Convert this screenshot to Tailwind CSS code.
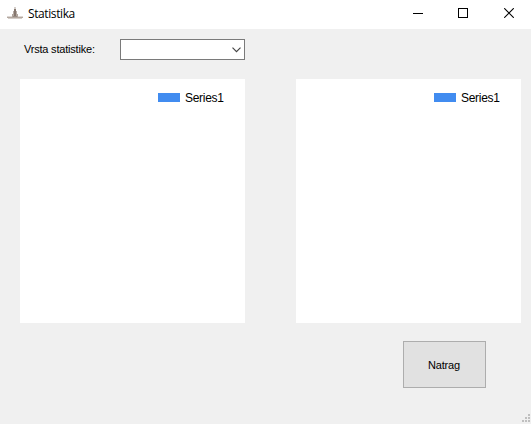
<!DOCTYPE html>
<html lang="hr">
<head>
<meta charset="utf-8">
<title>Statistika</title>
<script src="https://cdn.jsdelivr.net/npm/@tailwindcss/browser@4"></script>
</head>
<body class="w-[531px] h-[424px] overflow-hidden bg-[#f0f0f0] text-black font-['Liberation_Sans',Arial,sans-serif] flex flex-col">
  <header class="h-[29px] shrink-0 bg-white flex items-start">
    <svg class="ml-[7px] mt-[7px] w-4 h-3 shrink-0" viewBox="0 0 16 12" shape-rendering="crispEdges">
      <path d="M7 0h2v2H7z" fill="#d5cfcb"/>
      <path d="M7 2h2v7H7z" fill="#86786f"/>
      <path d="M6 4h1v5H6z M9 4h1v5H9z" fill="#b5aaa3"/>
      <path d="M5 7h1v3H5z M10 7h1v3h-1z" fill="#b0a49c"/>
      <path d="M0 9h5v1H0z M11 9h5v1h-5z" fill="#ded8d4"/>
      <path d="M6 9h4v1H6z" fill="#988b83"/>
      <path d="M0 10h16v1H0z" fill="#b3a8a0"/>
      <path d="M1 11h14v1H1z" fill="#d5cec9"/>
    </svg>
    <h1 class="ml-[5px] mt-[6px] text-[12px] leading-4 tracking-[-0.4px] font-['Open_Sans','Noto_Sans',sans-serif]">Statistika</h1>
    <div class="ml-auto mt-2 mr-[17px] flex gap-[35px]">
      <svg class="w-[10px] h-[10px]" viewBox="0 0 10 10" shape-rendering="crispEdges"><path d="M0 5h10v1H0z"/></svg>
      <svg class="w-[10px] h-[10px]" viewBox="0 0 10 10" shape-rendering="crispEdges"><path d="M.5.5h9v9h-9z" fill="none" stroke="#000"/></svg>
      <svg class="w-[10px] h-[10px] ml-px" viewBox="0 0 10 10"><path d="M.2.2l9.6 9.6M9.8.2L.2 9.8" fill="none" stroke="#000" stroke-width="1.1"/></svg>
    </div>
  </header>
  <main class="flex-1 flex flex-col pt-[10px] pl-5">
    <div class="flex h-[21px]">
      <label class="w-[100px] pl-1 text-[11px] leading-[21px] tracking-[-0.2px] whitespace-nowrap">Vrsta statistike:</label>
      <div class="w-[125px] h-[21px] border border-[#7a7a7a] bg-white flex items-center justify-end pr-[3px]">
        <svg class="w-[9px] h-[6px]" viewBox="0 0 9 6"><path d="M.5.7l4 4 4-4" fill="none" stroke="#444" stroke-width="1.15"/></svg>
      </div>
    </div>
    <div class="mt-[19px] flex gap-[51px]">
      <section class="w-[225px] h-[244px] bg-white flex justify-end pt-3 pr-[21px]">
        <div class="flex h-[14px] w-[66px]">
          <span class="w-[22px] h-[9px] mt-[2px] mr-[5px] bg-[#418cf0] shrink-0"></span>
          <span class="text-[12px] leading-[14px] tracking-[-0.3px]">Series1</span>
        </div>
      </section>
      <section class="w-[225px] h-[244px] bg-white flex justify-end pt-3 pr-[21px]">
        <div class="flex h-[14px] w-[66px]">
          <span class="w-[22px] h-[9px] mt-[2px] mr-[5px] bg-[#418cf0] shrink-0"></span>
          <span class="text-[12px] leading-[14px] tracking-[-0.3px]">Series1</span>
        </div>
      </section>
    </div>
    <div class="mt-[18px] flex justify-end pr-[45px]">
      <button class="w-[83px] h-[47px] border border-[#adadad] bg-[#e1e1e1] text-[11px] leading-[14px] tracking-[-0.2px] pr-px">Natrag</button>
    </div>
    <div class="mt-auto flex justify-end pr-px pb-[2px]">
      <svg class="w-2 h-2" viewBox="0 0 8 8" shape-rendering="crispEdges"><path d="M6 0h2v2H6zM3 3h2v2H3zM6 3h2v2H6zM0 6h2v2H0zM3 6h2v2H3zM6 6h2v2H6z" fill="#bfbfbf"/></svg>
    </div>
  </main>
</body>
</html>
